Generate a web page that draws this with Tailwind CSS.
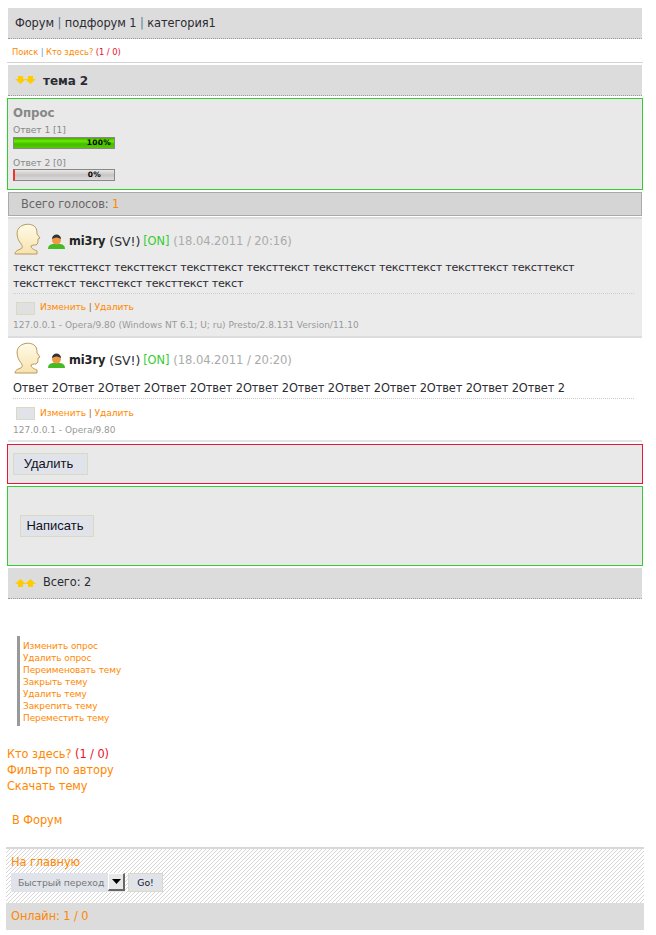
<!DOCTYPE html>
<html><head><meta charset="utf-8">
<script src="https://cdn.jsdelivr.net/npm/@tailwindcss/browser@4"></script>
</head>
<body class="bg-white font-['DejaVu_Sans',sans-serif] text-[11.4px] tracking-[-0.08px] text-[#2b2b33]">
<div class="w-[650px] h-[935px] overflow-hidden pt-[8px] px-[7px]">
  <div class="mx-[1px] h-[31px] bg-[#dcdcdc] border-b border-dotted border-[#999] flex items-center pl-[7px] pt-[1px]"><span>Форум <span class="text-[#5a7a9a]">|</span> подфорум 1 <span class="text-[#5a7a9a]">|</span> категория1</span></div>
  <div class="h-[24px] border-b border-[#d4d4d4] flex items-center pl-[5px] pt-[4px] text-[8.4px] text-[#ff8800]"><span>Поиск <span class="text-[#5aa0e0]">|</span> Кто здесь? <span class="text-[#e8102e]">(1 / 0)</span></span></div>
  <div class="mx-[1px] mt-[2px] h-[31px] bg-[#dcdcdc] border-b border-dotted border-[#999] flex items-center pl-[7px] pt-[2px] font-bold text-[12px]">
    <svg width="21" height="8" viewBox="0 0 21 8" class="mr-[7px] -mt-[2px]"><path d="M3 0h5v3h3L5.500 8 0 3h3zM13 0h5v3h3l-5.500 5L10 3h3z" fill="#ffcc00"/></svg>
    <span>тема 2</span>
  </div>
  <div class="mt-[2px] h-[92px] bg-[#e9e9e9] border border-[#33cc33] pl-[5px] pt-[6px] text-[#888]">
    <div class="font-bold text-[11.8px] leading-[16px]">Опрос</div>
    <div class="text-[9.2px] leading-[12px] mt-[3px]">Ответ 1 [1]</div>
    <div class="relative w-[102px] h-[12px] mt-[1px] border border-[#888] bg-[linear-gradient(#4ea800,#66ee00_30%,#44bb00_60%,#55cc00)]"><span class="absolute right-[3px] top-0 text-[7.5px] tracking-[0.3px] leading-[10px] font-bold text-black">100%</span></div>
    <div class="text-[9.2px] leading-[11px] mt-[8px]">Ответ 2 [0]</div>
    <div class="relative w-[102px] h-[12px] mt-[1px] border border-[#888] border-l-[2px] border-l-[#ee3333] bg-[linear-gradient(#e8e8e8,#c9c4c4_50%,#dcdcdc)]"><span class="absolute right-[13px] top-0 text-[7.5px] tracking-[0.3px] leading-[10px] font-bold text-black">0%</span></div>
  </div>
  <div class="mx-[1px] mt-[2px] h-[24px] bg-[#d5d5d5] border border-[#aaa] flex items-center pl-[12px] pt-[1px] text-[#666]"><span>Всего голосов: <span class="text-[#ff8800]">1</span></span></div>
  <div class="mx-[1px] mt-[1px] h-[121px] bg-[#ebebeb] border-t-2 border-[#dcdcdc] border-b-2 pl-[5px]">
    <div class="flex items-center h-[37px] pt-[3px] pl-[1px]">
      <svg width="28" height="33" viewBox="0 0 28 33"><defs><linearGradient id="a" x1="0" y1="0" x2="0" y2="1"><stop offset="0" stop-color="#fffbe8"/><stop offset="1" stop-color="#f8e2ad"/></linearGradient></defs><path d="M1 31C1 27 6 27 8 25C9 23 7 21 5 18C3 14 2 8 5 5C8 1 16 0 20 3C23 5 23 9 23 11L26 15L24 16C24 19 24 21 22 22C20 22 18 22 17 23C17 26 21 27 23 28L23 31Z" fill="url(#a)" stroke="#b89a60"/></svg>
      <svg width="17" height="15" viewBox="0 0 17 15" class="ml-[6px] mr-[4px] mt-[5px]"><path d="M0 15c0-4 3-5 6-5h5c3 0 6 1 6 5z" fill="#44bb22"/><circle cx="8.500" cy="6" r="4.500" fill="#ee9944"/><path d="M4 5c0-6 9-6 9 0-3-2-6-2-9 0z" fill="#333"/></svg>
      <div class="flex items-center pt-[6px]"><span class="font-bold text-[#222]">mi3ry</span><span class="ml-[4px] text-[12.5px]">(SV!)</span><span class="ml-[3px] text-[#33cc33]">[ON]</span><span class="ml-[4px] text-[11.6px] text-[#aaa]">(18.04.2011 / 20:16)</span></div>
    </div>
    <div class="text-[11.2px] tracking-[-0.27px] leading-[16px] pt-[4px] pb-[1px] mr-[8px] border-b border-dotted border-[#ccc]">текст тексттекст тексттекст тексттекст тексттекст тексттекст тексттекст тексттекст тексттекст тексттекст тексттекст тексттекст текст</div>
    <div class="flex items-center h-[25px] pl-[3px] pt-[3px] text-[9.1px] text-[#ff8800]"><span class="w-[19px] h-[13px] bg-[#e0e0e0] border border-[#d9d9c4] mr-[5px]"></span><span>Изменить <span class="text-[#996633]">|</span> Удалить</span></div>
    <div class="text-[9px] tracking-normal leading-[12px] text-[#999] whitespace-nowrap">127.0.0.1 - Opera/9.80 (Windows NT 6.1; U; ru) Presto/2.8.131 Version/11.10</div>
  </div>
  <div class="mx-[1px] h-[104px] border-b-2 border-[#e4e4e4] pl-[5px]">
    <div class="flex items-center h-[37px] pt-[3px] pl-[1px]">
      <svg width="28" height="33" viewBox="0 0 28 33"><path d="M1 31C1 27 6 27 8 25C9 23 7 21 5 18C3 14 2 8 5 5C8 1 16 0 20 3C23 5 23 9 23 11L26 15L24 16C24 19 24 21 22 22C20 22 18 22 17 23C17 26 21 27 23 28L23 31Z" fill="url(#a)" stroke="#b89a60"/></svg>
      <svg width="17" height="15" viewBox="0 0 17 15" class="ml-[6px] mr-[4px] mt-[5px]"><path d="M0 15c0-4 3-5 6-5h5c3 0 6 1 6 5z" fill="#44bb22"/><circle cx="8.500" cy="6" r="4.500" fill="#ee9944"/><path d="M4 5c0-6 9-6 9 0-3-2-6-2-9 0z" fill="#333"/></svg>
      <div class="flex items-center pt-[6px]"><span class="font-bold text-[#222]">mi3ry</span><span class="ml-[4px] text-[12.5px]">(SV!)</span><span class="ml-[3px] text-[#33cc33]">[ON]</span><span class="ml-[4px] text-[11.6px] text-[#aaa]">(18.04.2011 / 20:20)</span></div>
    </div>
    <div class="tracking-[-0.12px] leading-[16px] pt-[5px] pb-[2px] mr-[8px] border-b border-dotted border-[#ccc]">Ответ 2Ответ 2Ответ 2Ответ 2Ответ 2Ответ 2Ответ 2Ответ 2Ответ 2Ответ 2Ответ 2Ответ 2</div>
    <div class="flex items-center h-[25px] pl-[3px] pt-[4px] text-[9.1px] text-[#ff8800]"><span class="w-[19px] h-[13px] bg-[#e0e4ea] border border-[#d9d9c4] mr-[5px]"></span><span>Изменить <span class="text-[#996633]">|</span> Удалить</span></div>
    <div class="text-[9px] tracking-normal leading-[12px] text-[#999]">127.0.0.1 - Opera/9.80</div>
  </div>
  <div class="mt-[2px] h-[40px] bg-[#e9e9e9] border border-[#e0183c] pl-[5px] pt-[8px]">
    <button class="w-[75px] h-[22px] pr-[4px] bg-[#e0e4ea] border border-[#d9d9c4] text-[13px] tracking-normal font-['Liberation_Sans'] text-[#112]">Удалить</button>
  </div>
  <div class="mt-[2px] h-[80px] bg-[#e9e9e9] border border-[#33cc33] pl-[12px] pt-[28px]">
    <button class="w-[74px] h-[22px] pr-[4px] bg-[#e0e4ea] border border-[#d9d9c4] text-[13px] tracking-normal font-['Liberation_Sans'] text-[#112]">Написать</button>
  </div>
  <div class="mx-[1px] mt-[2px] h-[31px] bg-[#dcdcdc] border-b border-dotted border-[#999] flex items-center pl-[7px]">
    <svg width="21" height="8" viewBox="0 0 21 8" class="mr-[7px]"><path d="M3 8h5V5h3L5.500 0 0 5h3zM13 8h5V5h3L15.500 0 10 5h3z" fill="#ffcc00"/></svg>
    <span>Всего: 2</span>
  </div>
  <div class="ml-[10px] mt-[37px] h-[90px] border-l-[3px] border-[#999] pl-[3px] pt-[4px] text-[8.95px] leading-[12px] text-[#ff8800]">
    <div>Изменить опрос</div><div>Удалить опрос</div><div>Переименовать тему</div><div>Закрыть тему</div><div>Удалить тему</div><div>Закрепить тему</div><div>Переместить тему</div>
  </div>
  <div class="mt-[20px] leading-[16px] text-[#ff8800]">
    <div>Кто здесь? <span class="text-[#e8102e]">(1 / 0)</span></div>
    <div>Фильтр по автору</div>
    <div>Скачать тему</div>
  </div>
  <div class="mt-[18px] pl-[5px] leading-[16px] text-[#ff8800]">В Форум</div>
  <div class="relative -mx-[1px] mt-[19px] h-[56px] border-t-2 border-[#d8d8d8] pl-[5px] pt-[5px]">
    <svg class="absolute inset-0" width="100%" height="100%" shape-rendering="crispEdges"><defs><pattern id="h" width="4" height="4" patternUnits="userSpaceOnUse"><path d="M3 0h1v1H3zM2 1h1v1H2zM1 2h1v1H1zM0 3h1v1H0z" fill="#d6d6d6"/></pattern></defs><rect width="100%" height="100%" fill="url(#h)"/></svg>
    <div class="relative leading-[16px] text-[#ff8800]">На главную</div>
    <div class="relative flex mt-[3px] h-[19px] text-[9.3px]">
      <div class="w-[114px] bg-[#e0e4ea] flex items-center pl-[7px] text-[#777] relative">Быстрый переход
        <span class="absolute right-0 top-0 w-[17px] h-[18px] bg-[#e8e8e8] border-t border-l border-[#fff] border-r-2 border-b-2 border-r-[#666] border-b-[#666] flex items-center justify-center"><svg width="9" height="5" viewBox="0 0 9 5"><path d="M0 0h9L4.500 5z" fill="#000"/></svg></span>
      </div>
      <div class="ml-[3px] w-[35px] bg-[#e0e4ea] border border-[#d9d9c4] flex items-center justify-center text-[#112]">Go!</div>
    </div>
  </div>
  <div class="-mx-[1px] h-[27px] bg-[#dcdcdc] flex items-center pl-[5px] pt-[1px] text-[#ff8800]">Онлайн: 1 / 0</div>
</div>
</body></html>
